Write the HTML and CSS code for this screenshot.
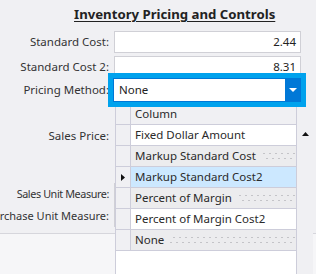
FILE: index.html
```
<!DOCTYPE html>
<html lang="en">
<head>
  <meta charset="UTF-8">
  <title>Inventory Pricing and Controls</title>
  <link rel="stylesheet" href="styles.css">
</head>
<body>
  <div class="panel">
    <div class="title">Inventory Pricing and Controls</div>

    <div class="row row-first">
      <div class="label"><span>Standard Cost:</span></div>
      <div class="field num">2.44</div>
    </div>
    <div class="row row-second">
      <div class="label"><span>Standard Cost 2:</span></div>
      <div class="field num">8.31</div>
    </div>

    <!-- open combo box with its drop-down list -->
    <div class="row row-combo">
      <div class="label"><span>Pricing Method:</span></div>
      <div class="combo">
        <span class="combo-text">None</span>
        <span class="combo-btn">
          <svg width="8" height="4" viewBox="0 0 8 4"><path d="M0 0h8L4 4z" fill="#fff"/></svg>
        </span>
        <div class="dropdown">
          <div class="grid">
            <div class="grid-row head"><span class="rh"></span><span class="cell">Column</span></div>
            <div class="grid-row"><span class="rh"></span><span class="cell">Fixed Dollar Amount</span></div>
            <div class="grid-row alt"><span class="rh"></span><span class="cell">Markup Standard Cost</span></div>
            <div class="grid-row selected">
              <span class="rh"><svg width="4" height="7" viewBox="0 0 4 7"><path d="M0 0l4 3.5L0 7z" fill="#111"/></svg></span>
              <span class="cell">Markup Standard Cost2</span>
            </div>
            <div class="grid-row alt"><span class="rh"></span><span class="cell">Percent of Margin</span></div>
            <div class="grid-row"><span class="rh"></span><span class="cell">Percent of Margin Cost2</span></div>
            <div class="grid-row alt"><span class="rh"></span><span class="cell">None</span></div>
          </div>
          <div class="scroll">
            <svg class="scroll-up" width="7" height="4" viewBox="0 0 7 4"><path d="M3.5 0L7 4H0z" fill="#111"/></svg>
          </div>
        </div>
      </div>
    </div>

    <div class="row row-price">
      <div class="label"><span>Sales Price:</span></div>
    </div>
    <div class="row row-unit">
      <div class="label label-tight"><span>Sales Unit Measure:</span></div>
      <div class="field"></div>
    </div>
    <div class="row">
      <div class="label label-wide"><span>Purchase Unit Measure:</span></div>
      <div class="field"></div>
    </div>
  </div>
</body>
</html>
```

FILE: styles.css
```
body {
  margin: 0;
  font-family: 'Noto Sans', sans-serif;
  font-size: 11.5px;
  color: #333;
  background-color: #f6f6f8;
  overflow: hidden;
  height: 274px;
}

.panel {
  background-color: #f0f0f3;
  padding: 6px 0 6px;
  border-bottom: 1px solid #d6d6dc;
}

.title {
  padding-left: 74px;
  font-size: 13.2px;
  font-weight: bold;
  line-height: 17px;
  color: #222;
  text-decoration: underline;
  text-underline-offset: 2px;
  margin-bottom: 8px;
}

.row {
  display: grid;
  grid-template-columns: 109px 187px;
  column-gap: 5px;
  height: 22px;
  align-items: center;
}

.row-second {
  margin-top: 3px;
}

.row-combo {
  height: 24px;
}

.row-price {
  margin-top: 23px;
}

.row-unit {
  margin-top: 36px;
}

.label {
  display: flex;
  justify-content: flex-end;
  white-space: nowrap;
  line-height: 16px;
}

.label-tight {
  font-size: 10.8px;
  letter-spacing: -0.4px;
}

.label-wide {
  font-size: 11px;
}

.field {
  box-sizing: border-box;
  height: 22px;
  background-color: #fff;
  border: 1px solid #d0d0d6;
  padding: 0 4px;
  line-height: 20px;
  color: #222;
}

.field.num {
  text-align: right;
}

/* focused combo box */
.combo {
  position: relative;
  box-sizing: border-box;
  height: 24px;
  margin-left: -1px;
  width: 188px;
  display: flex;
  background-color: #fff;
  border: 1px solid #0078d7;
  box-shadow: 0 0 0 5px #00a2ed;
}

.combo-text {
  flex: 1;
  padding-left: 5px;
  line-height: 22px;
  color: #222;
}

.combo-btn {
  width: 15px;
  background-color: #0078d7;
  display: flex;
  align-items: center;
  justify-content: center;
}

.dropdown {
  position: absolute;
  top: 28px;
  left: 1px;
  width: 198px;
  height: 180px;
  display: flex;
}

.grid {
  flex: 1;
  background-color: #fff;
  border-left: 1px solid #cdcdda;
  border-right: 1px solid #cdcdda;
}

.grid-row {
  display: flex;
  height: 20px;
  border-bottom: 1px solid #cdcdda;
  line-height: 20px;
  color: #2a2a2a;
}

.grid-row.head {
  height: 17px;
  line-height: 14px;
  background-color: #f0f0f3;
}

.grid-row.alt {
  background-color: #ececee;
  background-image: radial-gradient(circle, #c4c4c8 0.6px, transparent 1px),
                    radial-gradient(circle, #c4c4c8 0.6px, transparent 1px);
  background-size: 6px 3px, 6px 3px;
  background-position: 1px 6px, 4px 11px;
  background-repeat: repeat-x;
}

.grid-row.selected {
  background-color: #cce8ff;
}

.rh {
  width: 14px;
  flex: none;
  border-right: 1px solid #cdcdda;
  background-color: #f0f0f3;
  display: flex;
  align-items: center;
  justify-content: center;
}

.cell {
  padding: 0 6px 0 4px;
}

.grid-row.alt .cell {
  background-color: #ececee;
}

.scroll {
  width: 16px;
  background-color: #f0f0f3;
  display: flex;
  flex-direction: column;
  align-items: center;
}

.scroll-up {
  margin-top: 25px;
}
```
